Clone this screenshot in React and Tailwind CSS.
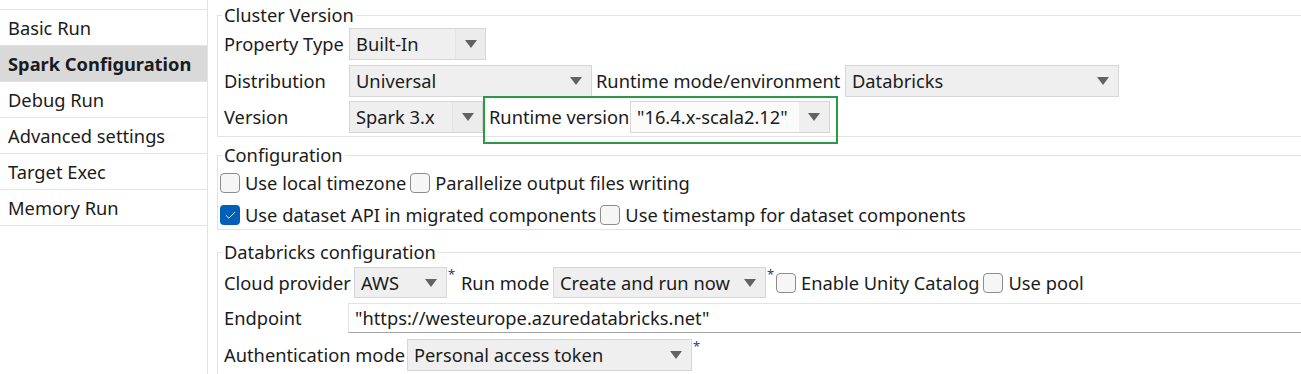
import { Check } from "lucide-react";

function Arrow() {
  return (
    <svg width="12" height="8" viewBox="0 0 12 8" className="block">
      <path d="M0 0 H12 L6 8 Z" fill="#626262" />
    </svg>
  );
}

function Select({ value, width, white = false, split = false }) {
  return (
    <div
      className={`flex h-full shrink-0 items-stretch border border-[#d6d6d6] ${white ? "bg-[#fbfbfb]" : "bg-[#efefef]"}`}
      style={{ width }}
    >
      <span className="flex-1 truncate pl-[6px] leading-[29px]">{value}</span>
      <span
        className={`flex w-[30px] items-center justify-center ${split ? "border-l border-[#e4e4e4] bg-[#ececec]" : ""} ${white ? "bg-[#efefef]" : ""}`}
      >
        <Arrow />
      </span>
    </div>
  );
}

function Box({ checked }) {
  if (checked) {
    return (
      <span className="flex h-[20px] w-[20px] shrink-0 items-center justify-center rounded-[4px] bg-[#005fb8]">
        <Check size={13} strokeWidth={1.6} color="#fff" />
      </span>
    );
  }
  return <span className="h-[20px] w-[20px] shrink-0 rounded-[4px] border border-[#8d8d8d] bg-[#f6f6f6]" />;
}

function Star() {
  return <span className="self-start pl-[1px] text-[13px] leading-[14px] text-[#1e3f73]">*</span>;
}

export default function App() {
  const nav = ["Basic Run", "Spark Configuration", "Debug Run", "Advanced settings", "Target Exec", "Memory Run"];

  return (
    <div className="flex h-[374px] w-full overflow-hidden bg-white font-['Noto_Sans',sans-serif] text-[18.3px] leading-[24px] text-[#1b1b1b]">
      <aside className="w-[208px] shrink-0 border-r border-[#e2e2e2] pt-[9px]">
        <div className="border-t border-[#e2e2e2]">
          {nav.map((n) => (
            <div
              key={n}
              className={`flex h-[36px] items-center border-b border-[#e2e2e2] pl-[8px] ${n === "Spark Configuration" ? "bg-[#d9d9d9] font-bold" : ""}`}
            >
              {n}
            </div>
          ))}
        </div>
      </aside>

      <main className="flex-1 overflow-hidden pl-[9px]">
        <fieldset className="mt-[3px] mr-[-20px] border border-[#e3e3e3] pb-[3px] pl-[4px]">
          <legend className="h-[24px] px-[2px]">Cluster Version</legend>
          <div className="mt-[1px] flex h-[32px] items-center pl-[2px]">
            <span className="w-[125px]">Property Type</span>
            <Select value="Built-In" width={137} split />
          </div>
          <div className="mt-[5px] flex h-[32px] items-center pl-[2px]">
            <span className="w-[125px]">Distribution</span>
            <Select value="Universal" width={243} />
            <span className="w-[253px] pl-[4px]">Runtime mode/environment</span>
            <Select value="Databricks" width={274} />
          </div>
          <div className="mt-[4px] flex items-start pl-[2px]">
            <span className="w-[125px] leading-[32px]">Version</span>
            <div className="h-[32px]">
              <Select value="Spark 3.x" width={134} split />
            </div>
            <div className="mt-[-5px] mb-[-11px] flex w-[355px] items-start border-2 border-[#2a9a47] pt-[3px] pr-[6px] pb-[9px] pl-[4px]">
              <span className="w-[141px] leading-[32px]">Runtime version</span>
              <div className="h-[32px]">
                <Select value={'"16.4.x-scala2.12"'} width={200} white />
              </div>
            </div>
          </div>
        </fieldset>

        <fieldset className="mt-[6px] mr-[-20px] border border-[#e3e3e3] pb-[4px] pl-[4px]">
          <legend className="h-[24px] px-[2px]">Configuration</legend>
          <div className="mt-[6px] flex h-[20px] items-center gap-[5px] ml-[-2px]">
            <Box />
            <span className="mr-[-1px]">Use local timezone</span>
            <Box />
            <span>Parallelize output files writing</span>
          </div>
          <div className="mt-[12px] flex h-[20px] items-center gap-[5px] ml-[-2px]">
            <Box checked />
            <span className="mr-[-1px]">Use dataset API in migrated components</span>
            <Box />
            <span>Use timestamp for dataset components</span>
          </div>
        </fieldset>

        <fieldset className="mt-[10px] mr-[-20px] border border-[#e3e3e3] pb-[4px] pl-[4px]">
          <legend className="h-[24px] px-[2px]">Databricks configuration</legend>
          <div className="mt-[3px] flex h-[31px] items-center pl-[2px]">
            <span className="w-[130px]">Cloud provider</span>
            <Select value="AWS" width={93} />
            <span className="w-[14px] self-start pl-[1px] text-[13px] leading-[14px] text-[#1e3f73]">*</span>
            <span className="w-[92px]">Run mode</span>
            <Select value="Create and run now" width={213} />
            <span className="w-[9px] self-start pl-[1px] text-[13px] leading-[14px] text-[#1e3f73]">*</span>
            <span className="ml-[1px] flex items-center gap-[5px]">
              <Box />
              <span className="mr-[-1px]">Enable Unity Catalog</span>
              <Box />
              <span>Use pool</span>
            </span>
          </div>
          <div className="mt-[5px] flex h-[30px] items-center pl-[2px]">
            <span className="w-[124px]">Endpoint</span>
            <div className="h-full flex-1 border border-[#e3e3e3] border-b-[#a3a3a3] bg-white pl-[6px] leading-[28px]">
              "https://westeurope.azuredatabricks.net"
            </div>
          </div>
          <div className="mt-[6px] flex h-[32px] items-center pl-[2px]">
            <span className="w-[183px]">Authentication mode</span>
            <Select value="Personal access token" width={285} />
            <Star />
          </div>
        </fieldset>
      </main>
    </div>
  );
}
